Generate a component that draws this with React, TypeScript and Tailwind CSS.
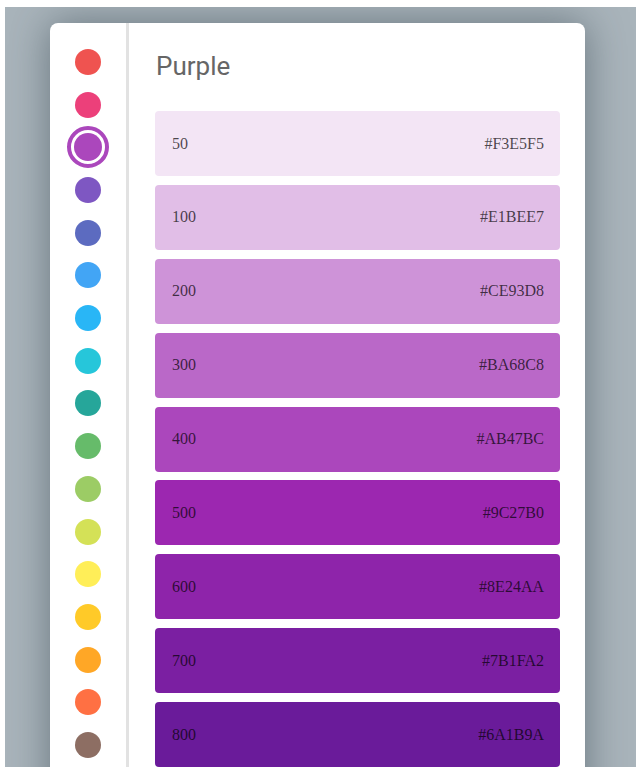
const dots = [
  "#EF5350",
  "#EC407A",
  "#AB47BC",
  "#7E57C2",
  "#5C6BC0",
  "#42A5F5",
  "#29B6F6",
  "#26C6DA",
  "#26A69A",
  "#66BB6A",
  "#9CCC65",
  "#D4E157",
  "#FFEE58",
  "#FFCA28",
  "#FFA726",
  "#FF7043",
  "#8D6E63",
];

const shades = [
  { name: "50", hex: "#F3E5F5" },
  { name: "100", hex: "#E1BEE7" },
  { name: "200", hex: "#CE93D8" },
  { name: "300", hex: "#BA68C8" },
  { name: "400", hex: "#AB47BC" },
  { name: "500", hex: "#9C27B0" },
  { name: "600", hex: "#8E24AA" },
  { name: "700", hex: "#7B1FA2" },
  { name: "800", hex: "#6A1B9A" },
];

const selected = 2;

export default function App() {
  return (
    <div className="flex h-[773px] w-[644px] bg-white pb-[6px] pl-[5px] pr-[8px] pt-[7px]">
      <div className="flex flex-1 overflow-hidden bg-[#a9b4bb] pl-[45px] pt-[16px]">
        <div className="flex h-[800px] w-[535px] shrink-0 overflow-hidden rounded-t-[8px] bg-white shadow-[0_0_40px_rgba(40,55,65,0.5)]">
          <div className="flex w-[76px] shrink-0 flex-col items-center pt-[17.6px]">
            {dots.map((c, i) => (
              <div key={c} className="flex h-[42.7px] shrink-0 items-center justify-center">
                {i === selected ? (
                  <div
                    className="flex h-[42px] w-[42px] items-center justify-center rounded-full border-4"
                    style={{ borderColor: c }}
                  >
                    <div className="h-[28px] w-[28px] rounded-full" style={{ background: c }} />
                  </div>
                ) : (
                  <div className="h-[26px] w-[26px] rounded-full" style={{ background: c }} />
                )}
              </div>
            ))}
          </div>
          <div className="w-[3px] shrink-0 bg-[#e2e2e2]" />
          <div className="flex flex-1 flex-col pl-[26px] pr-[25px] pt-[23px]">
            <div className="mb-[25px] h-[40px] pl-[1px] text-[26px] leading-[40px] text-[#666] [font-family:Roboto,'Noto_Sans',sans-serif]">
              Purple
            </div>
            <div className="flex flex-col gap-[8.875px]">
              {shades.map((s) => (
                <div
                  key={s.name}
                  className="flex h-[65px] shrink-0 items-center justify-between rounded-[4px] pl-[17px] pr-[16px] text-[16px] text-black/70 [font-family:'Liberation_Serif',serif]"
                  style={{ background: s.hex }}
                >
                  <span>{s.name}</span>
                  <span>{s.hex}</span>
                </div>
              ))}
            </div>
          </div>
        </div>
      </div>
    </div>
  );
}
